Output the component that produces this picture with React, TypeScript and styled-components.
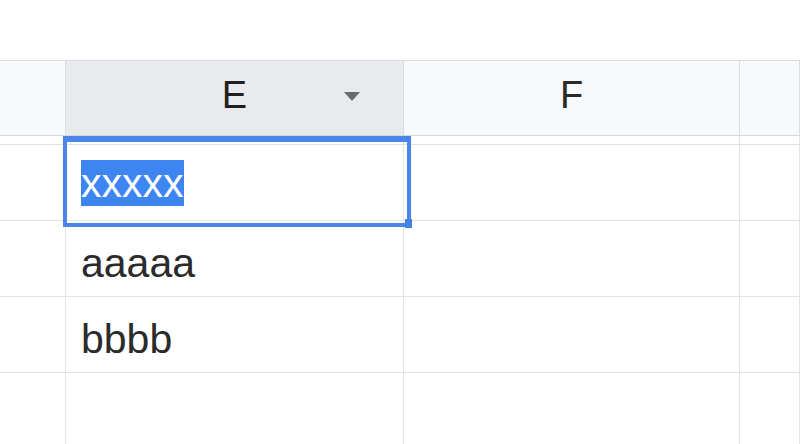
import React from 'react';
import styled, { createGlobalStyle } from 'styled-components';

const Global = createGlobalStyle`
  html, body { margin: 0; padding: 0; background: #fff; }
  body { font-family: "Liberation Sans", Arial, sans-serif; overflow: hidden; }
`;

const Page = styled.div`
  width: 800px;
  height: 444px;
  overflow: hidden;
  background: #fff;
  padding-top: 60px;
  box-sizing: border-box;
`;

const Grid = styled.div`
  display: grid;
  grid-template-columns: 66px 338px 336px 1fr;
  grid-template-rows: 75px 9px repeat(4, 76px);
  border-top: 1px solid #dcdde0;
`;

const HeaderCell = styled.div<{ $active?: boolean }>`
  position: relative;
  box-sizing: border-box;
  display: flex;
  align-items: center;
  justify-content: center;
  padding-bottom: 6px;
  background: ${(p) => (p.$active ? '#e8eaed' : '#f8f9fa')};
  border-right: 1px solid #dcdde0;
  border-bottom: 1px solid #d6d8db;
  color: ${(p) => (p.$active ? '#1f1f1f' : '#2a2a2a')};
  font-size: 38px;
  line-height: 44px;
`;

const DropArrow = styled.svg`
  position: absolute;
  right: 43px;
  top: 31px;
  width: 16px;
  height: 9px;
`;

const Spacer = styled.div`
  box-sizing: border-box;
  background: #fff;
  border-right: 1px solid #e2e3e3;
  border-bottom: 1px solid #dfe0e1;
`;

const Cell = styled.div<{ $editing?: boolean }>`
  position: relative;
  z-index: ${(p) => (p.$editing ? 2 : 'auto')};
  box-sizing: border-box;
  display: flex;
  align-items: ${(p) => (p.$editing ? 'flex-start' : 'flex-end')};
  padding: ${(p) => (p.$editing ? '15px 0 0 15px' : '0 0 10px 15px')};
  background: #fff;
  border-right: 1px solid #e2e3e3;
  border-bottom: 1px solid #e2e3e3;
  color: #2b2b2b;
  font-size: 41px;
  line-height: 46px;
  white-space: nowrap;
`;

const Highlight = styled.span`
  background: #3d86f1;
  color: #fff;
`;

const Selection = styled.div`
  position: absolute;
  top: -9px;
  left: -3px;
  right: -8px;
  bottom: -7px;
  border: 4px solid #4a86e8;
  border-top-width: 6px;
  pointer-events: none;

  &::after {
    content: '';
    position: absolute;
    right: -5px;
    bottom: -5px;
    width: 7px;
    height: 9px;
    background: #4580e4;
  }
`;

const columns = ['', 'E', 'F', ''];
const rows: string[][] = [
  ['', 'xxxxx', '', ''],
  ['', 'aaaaa', '', ''],
  ['', 'bbbb', '', ''],
  ['', '', '', ''],
];

export default function App() {
  return (
    <>
      <Global />
      <Page>
        <Grid>
          {columns.map((c, i) => (
            <HeaderCell key={`h${i}`} $active={c === 'E'}>
              {c}
              {c === 'E' && (
                <DropArrow viewBox="0 0 16 9">
                  <polygon points="0,0 16,0 8,9" fill="#6b6b6b" />
                </DropArrow>
              )}
            </HeaderCell>
          ))}
          {columns.map((_, i) => (
            <Spacer key={`s${i}`} />
          ))}
          {rows.map((r, ri) =>
            r.map((v, ci) => {
              const editing = ri === 0 && ci === 1;
              return (
                <Cell key={`${ri}-${ci}`} $editing={editing}>
                  {editing ? <Highlight>{v}</Highlight> : v}
                  {editing && <Selection />}
                </Cell>
              );
            })
          )}
        </Grid>
      </Page>
    </>
  );
}
